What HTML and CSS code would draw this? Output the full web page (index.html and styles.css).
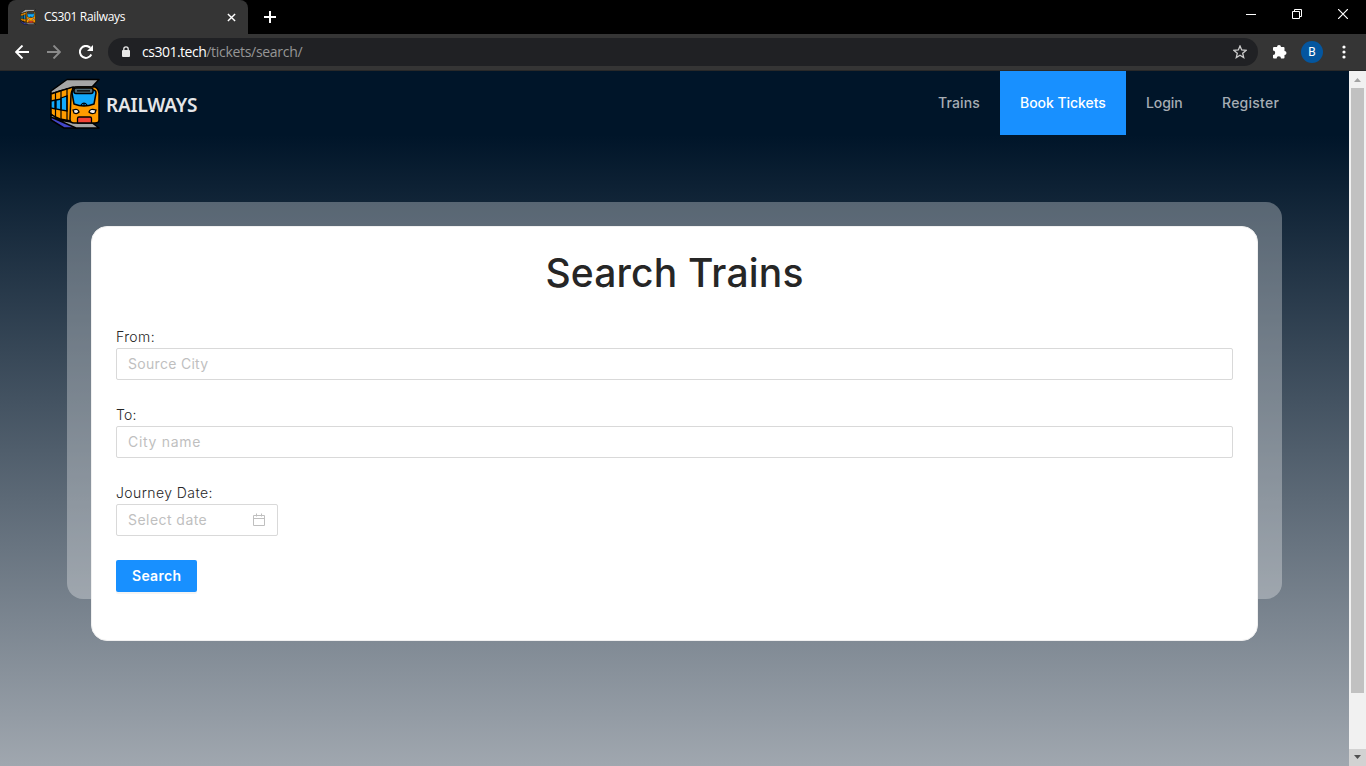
FILE: index.html
```html
<!DOCTYPE html>
<html lang="en">
<head>
<meta charset="utf-8">
<title>CS301 Railways</title>
<link rel="stylesheet" href="styles.css">
</head>
<body>
<svg class="defs" width="0" height="0">
  <symbol id="train" viewBox="2 2 50 52">
    <path d="M3 15 19 3.500h32l-7 7.500H30l-6 1-12 3-9 3z" fill="#a6a6a6" stroke="#000" stroke-width="1.500" stroke-linejoin="round"/>
    <path d="M3 18 12 15 25 11 23 45 12 43 3 39z" fill="#ff9c00" stroke="#000" stroke-width="1.500"/>
    <path d="M3 40v4l13 8h14L12 44z" fill="#4246c8" stroke="#000" stroke-width="1.500"/>
    <path d="M3 38v3l25 11h23l-8-6H23l-12-2z" fill="#a6a6a6" stroke="#000" stroke-width="1.500" stroke-linejoin="round"/>
    <path d="M3 25l4-1v9l-4-1zM8 24l5-1v11l-5-1zM13 22l6-2v15l-6-1z" fill="#12a9fb" stroke="#000" stroke-width="1.300"/>
    <path d="M7.500 16v25M13 14v29M19 12v32" stroke="#000" stroke-width="1.200"/>
    <path d="M27 11h20q3 1 4 6v27q0 3-4 3H26q-4 0-4-4l1-24q1-7 4-8z" fill="#ff9c00" stroke="#000" stroke-width="1.500"/>
    <path d="M24 17q0-3 3-3h18q3 0 3 3l-2 11q-10 4-20 0z" fill="#12a9fb" stroke="#000" stroke-width="1.500" stroke-linejoin="round"/>
    <rect x="26" y="12" width="19" height="5.500" rx="2" fill="#526a73" stroke="#000" stroke-width="1.500"/>
    <path d="M29 14.800h13M33 29q3-4 6 0M36 27v3" stroke="#000" stroke-width="1.200" fill="none"/>
    <path d="M25 34q5-2 6 2-2 2.500-5 1zM48 34q-6-2-7 2 2 2.500 6 1z" fill="#eee" stroke="#000" stroke-width="1.300"/>
    <path d="M29.500 47v-4.500q0-1.500 1.500-1.500h11q1.500 0 1.500 1.500V47z" fill="#f44336" stroke="#000" stroke-width="1.300"/>
  </symbol>
</svg>
<div class="browser">
  <div class="titlebar">
    <div class="tab">
      <svg class="favicon"><use href="#train"/></svg>
      <span class="tab-title">CS301 Railways</span>
      <svg class="tab-close" viewBox="0 0 10 10"><path d="M1 1l8 8M9 1 1 9" stroke="#fff" stroke-width="1.6"/></svg>
    </div>
    <svg class="new-tab" viewBox="0 0 12 12"><path d="M6 0v12M0 6h12" stroke="#fff" stroke-width="2"/></svg>
    <div class="window-buttons">
      <svg width="10" height="12" viewBox="0 0 10 12"><path d="M0 6.500h10" stroke="#fff"/></svg>
      <svg width="10" height="10" viewBox="0 0 10 10"><path d="M.5 2.500h7v7h-7zM2.500 2.500v-2h7v7h-2" stroke="#fff" fill="none"/></svg>
      <svg width="10" height="10" viewBox="0 0 10 10"><path d="M0 0l10 10M10 0 0 10" stroke="#fff" stroke-width="1.2"/></svg>
    </div>
  </div>
  <div class="toolbar">
    <svg class="tool" viewBox="0 0 14 14"><path d="M14 7H1M7.500 .5 1 7l6.500 6.500" stroke="#fff" stroke-width="1.9" fill="none"/></svg>
    <svg class="tool" viewBox="0 0 14 14"><path d="M0 7h13M6.500 .5 13 7l-6.500 6.500" stroke="#8b8b8b" stroke-width="1.9" fill="none"/></svg>
    <svg class="tool" viewBox="0 0 14 14"><path d="M12.300 9.500A6 6 0 1 1 11.300 2.800" stroke="#fff" stroke-width="2" fill="none"/><path d="M14 0v6H8z" fill="#fff"/></svg>
    <div class="address">
      <svg width="8" height="12" viewBox="0 0 8 12"><rect y="4" width="8" height="7" rx="1" fill="#e8e8e8"/><path d="M1.800 5V3a2.200 2.200 0 0 1 4.400 0v2" stroke="#e8e8e8" stroke-width="1.300" fill="none"/></svg>
      <span class="url"><b>cs301.tech</b><i>/tickets/search/</i></span>
      <svg class="star" viewBox="0 0 14 14"><path d="M7 1l1.700 4 4.300.4-3.300 2.800 1 4.300L7 10.200l-3.700 2.300 1-4.300L1 5.400 5.300 5z" fill="none" stroke="#ccc" stroke-width="1.300"/></svg>
    </div>
    <svg class="puzzle" viewBox="0 0 15 15"><path d="M1 4q0-1 1-1h3a2 2 0 1 1 4 0h2.500q1 0 1 1v3a2 2 0 1 1 0 4v2.500q0 1-1 1H9a2.200 2.200 0 0 0-4.400 0H2q-1 0-1-1V11a2.200 2.200 0 0 0 0-4.400z" fill="#fff"/></svg>
    <span class="avatar">B</span>
    <svg class="dots" viewBox="0 0 4 14"><g fill="#fff"><circle cx="2" cy="2" r="1.600"/><circle cx="2" cy="7" r="1.600"/><circle cx="2" cy="12" r="1.600"/></g></svg>
  </div>
  <div class="viewport">
    <div class="page">
      <header class="header">
        <div class="brand"><svg class="logo"><use href="#train"/></svg><span>RAILWAYS</span></div>
        <nav class="nav">
          <a class="trains">Trains</a><a class="book">Book Tickets</a><a class="login">Login</a><a class="register">Register</a>
        </nav>
      </header>
      <main class="panel">
        <form class="card">
          <h1><span>Search Trains</span></h1>
          <div class="field"><label class="l-from">From:</label><div class="input"><span class="p-source">Source City</span></div></div>
          <div class="field"><label class="l-to">To:</label><div class="input"><span class="p-city">City name</span></div></div>
          <div class="field"><label class="l-date">Journey Date:</label><div class="input date"><span class="p-date">Select date</span>
            <svg width="14" height="14" viewBox="0 0 14 14"><path d="M1.500 2.500h11v10h-11zM1.500 5.500h11M4.500 .5v3M9.500 .5v3" fill="none" stroke="#bfbfbf"/></svg></div></div>
          <div class="button"><span>Search</span></div>
        </form>
      </main>
    </div>
    <div class="scrollbar">
      <svg width="17" height="17" viewBox="0 0 17 17"><path d="M5 11h7L8.500 7z" fill="#a3a3a3"/></svg>
      <div class="thumb"></div>
      <svg class="down" width="17" height="17" viewBox="0 0 17 17"><path d="M5 6h7l-3.500 4z" fill="#505050"/></svg>
    </div>
  </div>
</div>
</body>
</html>
```
FILE: styles.css
```css
* { box-sizing: border-box; }
body { margin: 0; overflow: hidden; font-family: Inter, sans-serif; }
svg { display: block; flex: none; }
.defs { position: absolute; }
span, a, label { white-space: nowrap; }
.browser { width: 1366px; height: 766px; display: flex; flex-direction: column; }

.titlebar { height: 34px; background: #000; display: flex; align-items: center; padding-left: 8px; flex: none; }
.tab { width: 240px; height: 34px; background: #353535; border-radius: 8px 8px 0 0; display: flex; align-items: center; padding: 0 12px; }
.favicon { width: 16px; height: 16px; }
.tab-title { font: 12px "Open Sans", sans-serif; color: #fff; margin-left: 8px; flex: 1; letter-spacing: -.33px; padding-bottom: 1px; }
.tab-close { width: 9px; height: 9px; }
.new-tab { width: 12px; height: 12px; margin-left: 16px; }
.window-buttons { margin-left: auto; display: flex; align-items: center; gap: 36px; padding-right: 18px; height: 28px; margin-bottom: 6px; }

.toolbar { height: 37px; background: #353535; border-bottom: 1px solid #292929; display: flex; align-items: center; padding-left: 15px; flex: none; }
.tool { width: 14px; height: 14px; margin-right: 18px; }
.address { width: 1150px; height: 28px; margin-left: -3px; border-radius: 14px; background: #202124; display: flex; align-items: center; padding: 0 11px 0 14px; }
.url { flex: 1; margin-left: 12px; font: 14px "Open Sans", sans-serif; color: #969696; letter-spacing: -.38px; padding-bottom: 1px; }
.url b { font-weight: 400; color: #fff; letter-spacing: -.5px; }
.url i { font-style: normal; letter-spacing: -.3px; }
.star { width: 14px; height: 14px; }
.puzzle { width: 15px; height: 15px; margin: 0 0 2px 14px; }
.avatar { width: 22px; height: 22px; margin-left: 14px; border-radius: 50%; background: #04569f; color: #fff; font: 12px/22px Roboto, sans-serif; text-align: center; }
.dots { width: 4px; height: 14px; margin-left: 19px; }

.viewport { flex: 1; display: flex; min-height: 0; }
.page { width: 1349px; background: linear-gradient(#001529 64px, #a0a7af 100%); }
.header { height: 64px; display: flex; align-items: center; justify-content: space-between; padding: 0 50px; }
.brand { display: flex; align-items: center; color: #e5e6e8; font: 600 19px "Noto Sans", sans-serif; padding-top: 2px; }
.logo { width: 50px; height: 52px; margin-right: 6px; }
.brand span { letter-spacing: -.2px; padding-top: 1px; }
.nav { display: flex; height: 64px; line-height: 64px; font-size: 14px; font-weight: 500; color: #a6adb4; }
.nav a { padding-left: 20px; }
.nav .trains { width: 82px; letter-spacing: .15px; }
.nav .book { width: 126px; background: #1890ff; color: #fff; letter-spacing: -.05px; }
.nav .login { width: 76px; letter-spacing: -.1px; }
.nav .register { width: 97px; letter-spacing: .25px; }

.panel { width: 1215px; height: 397px; margin: 67px 0 0 67px; padding: 24px; border-radius: 16px; background: rgba(255,255,255,.3); }
.card { height: 415px; padding: 22px 24px; border: 1px solid #f0f0f0; border-radius: 16px; background: #fff; color: #262626; }
h1 { margin: 0 0 29px; font-size: 39px; line-height: 48px; font-weight: 500; text-align: center; letter-spacing: .17px; }
.field { margin-bottom: 24px; font-size: 14px; }
.field label { display: block; height: 22px; line-height: 21px; font-weight: 300; }
.l-from { letter-spacing: .4px; }
.l-to { letter-spacing: .2px; }
.l-date { letter-spacing: .42px; }
.p-source { letter-spacing: .3px; }
.p-date { letter-spacing: .45px; }
.p-city { letter-spacing: .7px; }
.field .input { height: 32px; border: 1px solid #d9d9d9; border-radius: 2px; padding: 0 11px; display: flex; align-items: center; justify-content: space-between; color: #bfbfbf; }
.input span { padding-bottom: 1px; }
.field .date { width: 162px; }
.button { width: 81px; height: 32px; line-height: 32px; padding-left: 16px; border-radius: 2px; background: #1890ff; color: #fff; font-size: 14px; font-weight: 600; letter-spacing: .3px; box-shadow: 0 2px 0 rgba(0,0,0,.045); }

.scrollbar { width: 17px; background: #f1f1f1; display: flex; flex-direction: column; align-items: center; }
.thumb { width: 13px; height: 605px; background: #c1c1c1; }
.down { margin-top: auto; background: #d2d2d2; }
```
